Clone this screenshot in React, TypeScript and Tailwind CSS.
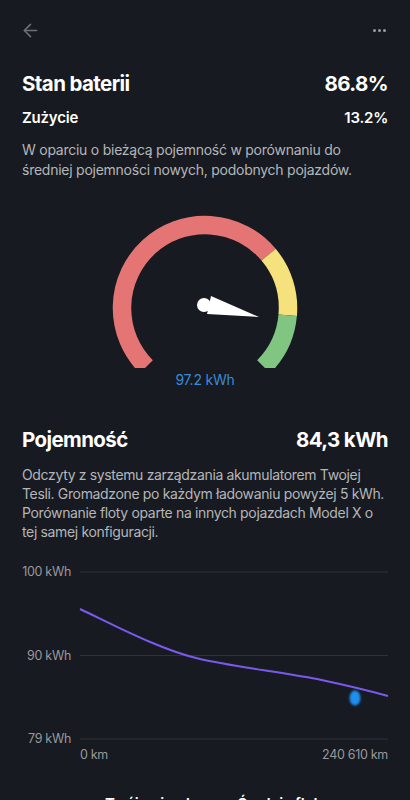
import { ArrowLeft } from 'lucide-react';

const C = { x: 100, y: 100, r: 83 };

// point on the gauge arc, angle in degrees (math convention, y up)
const pt = (deg: number) => {
  const a = (deg * Math.PI) / 180;
  return `${(C.x + C.r * Math.cos(a)).toFixed(2)} ${(C.y - C.r * Math.sin(a)).toFixed(2)}`;
};

const arc = (from: number, to: number) => {
  const large = from - to > 180 ? 1 : 0;
  return `M ${pt(from)} A ${C.r} ${C.r} 0 ${large} 1 ${pt(to)}`;
};

function Gauge() {
  return (
    <div className="mt-[28px] flex flex-col items-center">
      <svg width="200" height="160" viewBox="0 0 200 160">
        <path d={arc(225, 40)} fill="none" stroke="#e57575" strokeWidth="18.5" />
        <path d={arc(40, -5)} fill="none" stroke="#f5e27c" strokeWidth="18.5" />
        <path d={arc(-5, -45)} fill="none" stroke="#80c582" strokeWidth="18.5" />
        <circle cx="99" cy="97" r="7" fill="#ffffff" />
        <polygon points="106,88 154,109 102,106" fill="#ffffff" />
      </svg>
      <p className="mt-[4px] text-[14px] leading-[16px] tracking-[-0.2px] text-[#3a8ad6]">97.2 kWh</p>
    </div>
  );
}

function Chart() {
  return (
    <div className="mt-[19px] text-[12.5px] tracking-[-0.3px] text-[#97999e]">
      <div className="flex gap-[9px]">
        <div className="flex h-[191px] w-[49px] flex-col items-end justify-between leading-[24px] whitespace-nowrap">
          <span>100 kWh</span>
          <span>90 kWh</span>
          <span>79 kWh</span>
        </div>
        <svg width="308" height="191" viewBox="0 0 308 191" className="overflow-visible">
          <defs>
            <filter id="blur" x="-1" y="-1" width="3" height="3">
              <feGaussianBlur stdDeviation="1.2" />
            </filter>
          </defs>
          <line x1="0" y1="12" x2="308" y2="12" stroke="#2f3238" strokeWidth="1" />
          <line x1="0" y1="95.5" x2="308" y2="95.5" stroke="#2f3238" strokeWidth="1" />
          <line x1="0" y1="179" x2="308" y2="179" stroke="#2f3238" strokeWidth="1" />
          <path
            d="M0,49 C30,63 80,90 120,99 C150,106 200,112 237,119 C265,125 290,131 308,136"
            fill="none"
            stroke="#7b59ee"
            strokeWidth="2"
          />
          <ellipse cx="275" cy="138" rx="5.5" ry="7.5" fill="#1d8ff0" filter="url(#blur)" />
        </svg>
      </div>
      <div className="-mt-[4px] flex justify-between pl-[58px] leading-[16px]">
        <span>0 km</span>
        <span>240 610 km</span>
      </div>
    </div>
  );
}

export default function App() {
  return (
    <div className="h-[800px] overflow-hidden bg-[#171a20] px-[22px] font-['Inter','Liberation_Sans',sans-serif] text-white">
      {/* top bar */}
      <div className="flex h-[60px] items-center justify-between">
        <ArrowLeft className="-ml-[2px] h-[21px] w-[21px] text-[#6d7076]" strokeWidth={1.8} />
        <div className="flex gap-[2px] pr-[2px]">
          <span className="h-[3px] w-[3px] rounded-full bg-[#9a9ca1]" />
          <span className="h-[3px] w-[3px] rounded-full bg-[#9a9ca1]" />
          <span className="h-[3px] w-[3px] rounded-full bg-[#9a9ca1]" />
        </div>
      </div>

      {/* battery state */}
      <div className="mt-[10px] flex items-center justify-between text-[20.5px] font-bold leading-[28px] tracking-[-0.6px]">
        <h1>Stan baterii</h1>
        <span>86.8%</span>
      </div>
      <div className="mt-[9px] flex items-center justify-between text-[15px] font-semibold leading-[22px] tracking-[-0.2px]">
        <h2>Zużycie</h2>
        <span>13.2%</span>
      </div>
      <p className="mt-[11px] text-[14px] leading-[20px] tracking-[-0.25px] text-[#b4b6ba]">
        W oparciu o bieżącą pojemność w porównaniu do średniej pojemności nowych, podobnych pojazdów.
      </p>

      <Gauge />

      {/* capacity */}
      <div className="mt-[38px] flex items-center justify-between text-[20.5px] font-bold leading-[28px] tracking-[-0.6px]">
        <h1>Pojemność</h1>
        <span>84,3 kWh</span>
      </div>
      <p className="mt-[11px] text-[14px] leading-[19px] tracking-[-0.35px] text-[#b4b6ba]">
        Odczyty z systemu zarządzania akumulatorem Twojej Tesli. Gromadzone po każdym ładowaniu powyżej 5 kWh.
        Porównanie floty oparte na innych pojazdach Model X o tej samej konfiguracji.
      </p>

      <Chart />

      {/* legend */}
      <div className="mt-[31px] flex items-center gap-[48px] pl-[83px] text-[15px] font-semibold leading-[20px] tracking-[-0.2px]">
        <span>Twój pojazd</span>
        <span>Średnia floty</span>
      </div>
    </div>
  );
}
